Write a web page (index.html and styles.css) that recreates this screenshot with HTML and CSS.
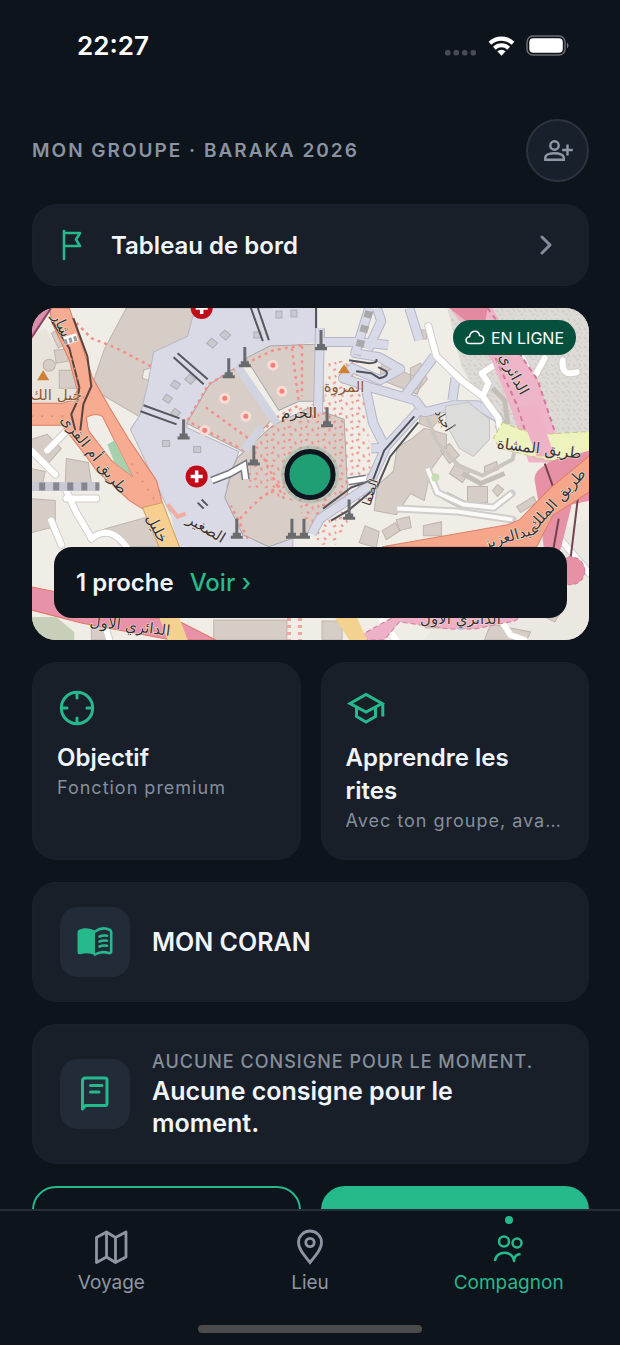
FILE: index.html
```html
<!DOCTYPE html>
<html lang="fr">
<head>
<meta charset="utf-8">
<meta name="viewport" content="width=device-width, initial-scale=1">
<title>Mon groupe</title>
<link rel="stylesheet" href="styles.css">
</head>
<body>
<div class="app">
  <header class="status">
    <time class="clock">22:27</time>
    <div class="status-icons">
      <svg width="32" height="8" viewBox="0 0 32 8" fill="#484b51"><rect x="0" y="1" width="5.500" height="5.500" rx="2"/><rect x="8.500" y="1" width="5.500" height="5.500" rx="2"/><rect x="17" y="1" width="5.500" height="5.500" rx="2"/><rect x="25.500" y="1" width="5.500" height="5.500" rx="2"/></svg>
      <svg width="27" height="20" viewBox="0 0 27 20" fill="#fff"><path d="M.6 5.700a18.500 18.500 0 0 1 25.800 0l-2.700 3.100a14.700 14.700 0 0 0-20.400 0z"/><path d="M5 10.700a12.300 12.300 0 0 1 17 0l-2.700 3a8.300 8.300 0 0 0-11.600 0z"/><path d="M9.300 15.300a6.200 6.200 0 0 1 8.400 0L13.500 19.800z"/></svg>
      <svg width="44" height="22" viewBox="0 0 44 22"><rect x="1" y="1" width="38" height="19" rx="6" fill="none" stroke="#6b6e73" stroke-width="1.500"/><rect x="3.300" y="3.300" width="33.500" height="14.500" rx="4" fill="#fff"/><path d="M41 7.500q3 3 0 6z" fill="#777a7f"/></svg>
    </div>
  </header>

  <main class="content">
    <div class="heading">
      <h1 class="group-name">MON GROUPE · BARAKA 2026</h1>
      <button class="add" aria-label="Ajouter une personne">
        <svg width="32" height="28" viewBox="0 0 32 28" fill="none" stroke="#8e97a4" stroke-width="2.400"><circle cx="12.500" cy="8.500" r="4.200"/><path d="M3.300 22.700v-2c0-6 18.500-6 18.500 0v2zM25.500 7.500v11M20.200 13h10.600"/></svg>
      </button>
    </div>

    <a class="card dashboard" href="#tableau">
      <svg width="28" height="32" viewBox="0 0 28 32" fill="none" stroke="#25b98c" stroke-width="2.600" stroke-linecap="round" stroke-linejoin="round"><path d="M5 30V2M5 4h16l-4 6.500 4 6.500H5"/></svg>
      <span class="title grow">Tableau de bord</span>
      <svg width="14" height="22" viewBox="0 0 14 22" fill="none" stroke="#858e9b" stroke-width="3" stroke-linecap="round" stroke-linejoin="round"><path d="M4 3l8 8-8 8"/></svg>
    </a>

    <section class="map" aria-label="Carte du groupe">
      <svg class="map-art" viewBox="0 0 557 331" preserveAspectRatio="xMidYMid slice">
        <defs>
          <pattern id="rock" width="11" height="9" patternUnits="userSpaceOnUse"><rect width="11" height="9" fill="#dedbd6"/><path d="M1 2l3 2M7 1l2 3M4 7l3-1M9 8l1-1" stroke="#c9c6c2" stroke-width="1"/></pattern>
          <pattern id="steps" width="17" height="13" patternUnits="userSpaceOnUse"><path d="M1 2l3-1M8 3l1 3M3 8l2 2M12 10l3-1M14 2l1 2" stroke="#f78580" stroke-width="1.700"/></pattern>
          <g id="minaret"><path d="M-1.500-10h3v16h-3zM-4 4h8v3h-8zM-6 7H6v3H-6z" fill="#6a6b6e"/></g>
          <g id="clinic"><circle r="11" fill="#c00c18"/><path d="M-6 0H6M0-6V6" stroke="#fff" stroke-width="3.500"/></g>
        </defs>
        <rect width="557" height="331" fill="#f0ede7"/>
        <!-- hillside -->
        <path d="M415 0h142v180l-65-38-35-34-28-50z" fill="url(#rock)"/>
        <path d="M480 240l77-30v121H390z" fill="#ebe8e1"/>
        <!-- grounds and blocks -->
        <path d="M0 28l14-8 25 37 6 27-13 16H0z" fill="#e8e3db"/>
        <g fill="#d6cdc6" stroke="#bfb4ab" stroke-width="1">
          <path d="M95 0h92l-6 11-16 9-4 8-13 6-3 11-12 10-21 7-1 8 8 3-7 30-1 7-46-27-5-4 13-38z"/>
          <path d="M20 25l15-8 6 16-14 7zM28 62h17v18H28zM23 42l12-1 2 12-12 2z"/><circle cx="18" cy="57" r="6"/>
          <path d="M0 131l16-5 14 14-15 17-15-10zM35 150l22 4 3 20-26 1zM0 190l24 2v26l-24 6zM0 160l14 3-3 14H0z"/>
          <path d="M74 220l40-11 20 29H98z"/>
          <path d="M350 54l40 18-5 14-38-15zM385 22h9v9h-9zM378 60l10-5 7 16-8 10-9-4z"/>
          <path d="M380 130l12-10 22 6 0 14-16 22-6 30-14-7-14 21-22-4 3-25 16-14 4-24zM388 106l12-6 9 9-10 11-12-5zM408 142l9-7 10 12-10 8zM424 154l14 8-8 12-13-9zM452 158l12-5 2 8-14 5zM435 178h20v16h-20zM415 184l18 9-4 7-18-9zM391 217l18-4v14h-18zM350 222l13-8 5 8-14 9zM333 217l14 6-3 16-17-5zM364 211l13-3 2 11-12 3zM484 198l17-10 3 6-16 10zM465 176l6 5-6 7-5-6z"/>
          <path d="M60 316h18v15H60zM182 311h73v20h-73zM290 312h20v19h-20zM393 305h18v14h-18zM514 300l13 5-5 8-12-6zM458 315l40 8-4 8h-42z"/>
        </g>
        <!-- plaza -->
        <path d="M185 0h72l10 37-20 2-34 16-37 24-20 36-1 4 52 24-12 35 17 42 17 5 32-5v25h-99l-23-40-17-35-23-49 10-15 7-29 6-33 34-16 5-19 16-9z" fill="#d9dae6" stroke="#b7b8c5"/>
        <path d="M240 0h46v34l-49 6z" fill="#d9dae6"/>
        <path d="M131 167l60-16 5 14-7 35 22 38h-65z" fill="#d9dae6"/>
        <g fill="#d8cec7" stroke="#aaa7aa">
          <path d="M155 115l23-39 28-18 36 51-31 34z"/><path d="M214 50l24-12 51-2 3 57-25 0-20 9z"/>
          <path d="M206 149l35-32 37-18 34 12 4 80-34 31-45 16-26-12-18-37 8-30z"/>
        </g>
        <path d="M295 55l30-5 10 60 7 83-63 5-65-20 12-50 42-30 25-5z" fill="url(#steps)"/>
        <path d="M258 185l28-3 34 30-16 24h-16z" fill="url(#steps)"/>
        <g fill="none" stroke="#f49089" stroke-width="2.500" stroke-dasharray="3 4">
          <path d="M40 10l20 20 25 10 38 20M156 112l21-36 31-18 34-16 28-5M160 115l53 27 30-32 24-13M174 99l48 35M260 40l7 55M270 38v50M208 210l20-20 28-18M216 230l-17-33M232 150l20 40"/>
        </g>
        <g fill="#f47f79" stroke="#f7dcd5" stroke-width="3"><circle cx="193" cy="90" r="4"/><circle cx="214" cy="108" r="4"/><circle cx="241" cy="57" r="4"/><circle cx="250" cy="83" r="4"/><circle cx="173" cy="122" r="4"/></g>
        <path d="M205 57l40 58M212 142l18-23" fill="none" stroke="#d1d4e0" stroke-width="8"/>
        <g fill="none" stroke="#aeb0b9"><path d="M158 66l6 5-5 5-6-5zM143 72l6 4-4 5-6-4zM135 86l6 4-4 5-6-4zM143 100l6 4-4 5-6-4zM131 132h7v6h-7zM162 138h7v6h-7zM180 30l6 5-5 5-6-5zM193 22l6 5-5 5-6-5zM222 24h7v6h-7zM244 3h6v7h-6zM259 2h6v7h-6z" fill="#c9c8cc"/></g>
        <g fill="none" stroke="#55575c" stroke-width="2"><path d="M142 49l30 27M146 45l30 26M109 103l36 13M112 97l36 13M219 0l12 33M226 0l11 32M284 0v25M166 194l6 6M170 191l6 6"/></g>
        <!-- lilac streets -->
        <g fill="none" stroke="#b4b6c8" stroke-width="10" stroke-linejoin="round"><path d="M288 20l-2 84M286 34h40l30 3M337 0l-14 45 24 4 21 12-20 11-28-12-9 10 30 10 42 12 9 12 28-7 25 0 20 12 8 14M370 91l32-43M420 92l3-22M333 77l8 38 12 24-14 1M377 0l10 32M345 1l4 12-13 28M386 103l-32 35-18 40-30 20-18 12-8 15"/></g>
        <g fill="none" stroke="#d9dae8" stroke-width="8" stroke-linejoin="round"><path d="M288 20l-2 84M286 34h40l30 3M337 0l-14 45 24 4 21 12-20 11-28-12-9 10 30 10 42 12 9 12 28-7 25 0 20 12 8 14M370 91l32-43M420 92l3-22M333 77l8 38 12 24-14 1M377 0l10 32M345 1l4 12-13 28M386 103l-32 35-18 40-30 20-18 12-8 15"/></g>
        <path d="M337 3l-12 44" stroke="#aaa9aa" stroke-width="8" stroke-dasharray="7 8"/>
        <path d="M317 52l20 3q9 0 7-4M324 63l15 2 8 5q10-2 7-7l-8-4M382 108l-30 34-11 29-22 8-28 21M386 114l-28 34-13 30-29 24-17 10" fill="none" stroke="#51535b" stroke-width="2"/>
        <path d="M413 98l23-4 21 17v20l-16 17-14-8-13-24z" fill="#dcdddb" stroke="#c4c5c3"/>
        <path d="M395 110l10 24 21 23 24 10 30-16 4-18" fill="none" stroke="#ccc6c0" stroke-width="4"/>
        <path d="M460 80l12 12 3 22-12 6M430 165l18 10 24-10" fill="none" stroke="#c4beb8" stroke-width="5"/>
        <!-- pale local roads -->
        <g fill="none" stroke="#d0cdca" stroke-width="8" stroke-linecap="round" stroke-linejoin="round"><path d="M396 18l8 30 26 25 20 15 16 22 2 15M450 88l6-13-7-10 16-10 9 9 10-9M490 50l10 22 12-22M530 52q-2 17 14 12M395 160l10 24 26 12 30 3 18-14M365 200l60 3 55 8M16 142l22-22M0 142l24 24M35 182l10 22 15 25M35 190h30M20 212l10 24M60 230q18-15 35 8M510 210l47 55M72 310l6 21"/></g>
        <g fill="none" stroke="#fff" stroke-width="6" stroke-linecap="round" stroke-linejoin="round"><path d="M396 18l8 30 26 25 20 15 16 22 2 15M450 88l6-13-7-10 16-10 9 9 10-9M490 50l10 22 12-22M530 52q-2 17 14 12M16 142l22-22M0 142l24 24M35 182l10 22 15 25M35 190h30M20 212l10 24M60 230q18-15 35 8M510 210l47 55M72 310l6 21M350 312l14 19M466 308l12 18 14 5"/></g>
        <g fill="none" stroke="#fbfaf8" stroke-width="4"><path d="M395 160l10 24 26 12 30 3 18-14M365 200l60 3 55 8"/></g>
        <circle cx="403" cy="169" r="4" fill="#c5dcb4"/>
        <path d="M0 178h68" stroke="#c8c9d4" stroke-width="9"/><path d="M8 178h60" stroke="#86878e" stroke-width="8" stroke-dasharray="6 8"/>
        <!-- main orange road -->
        <path d="M18 0h20l10 29 13 40 17 30 20 33 27 40 6 23-20 5-13-8-33-30-7-10-27-35L0 117V95h31l10-3 5-10-8-30-17-37z" fill="#f7ab90" stroke="#dc7d63"/>
        <path d="M55 109q9-5 16-1l12 24 18 36-21-16-23-30z" fill="#f0ede6" stroke="#dc7d63"/>
        <path d="M76 136l7-4 18 36-18-14z" fill="#a7d0ae"/>
        <path d="M20 12l18 28 10 39-2 14-6 13 4 16M42 10l14 38 4 30-8 18-3 26" fill="none" stroke="#594440" stroke-width="2"/>
        <path d="M33 33l13-4" stroke="#fff" stroke-width="8"/><path d="M33 34l13-4" stroke="#999" stroke-width="5" stroke-dasharray="3 2"/>
        <path d="M40 50l14 45M0 108h35M100 155l24 38" fill="none" stroke="#dc8c75" stroke-width="1.500" stroke-dasharray="2 8"/>
        <path d="M111 199l20-5 19 50h-20z" fill="#f8cf91" stroke="#cda05d"/>
        <path d="M136 196l10 12 8-3" fill="none" stroke="#f1ada0" stroke-width="4"/>
        <path d="M180 172l18-7 14-8 2 14M316 173l18-3" fill="none" stroke="#76787f" stroke-width="8"/><path d="M180 172l18-7 14-8 2 14M316 173l18-3" fill="none" stroke="#fff" stroke-width="5"/>
        <!-- ring road -->
        <path d="M0 0h20L0 30z" fill="#dd8cab"/><path d="M20 0L0 30" stroke="#864662" stroke-width="2"/>
        <path d="M417 0h43l11 20 34 52 21 62 3 20h-33l-17-52-20-50z" fill="#eeb4c8"/>
        <path d="M417 0h38l-4 24-10-5z" fill="#e18aa0"/>
        <path d="M455 0l16 22 34 50 20 60M463 50l22 48 16 52" fill="none" stroke="#d2799c" stroke-width="2" stroke-dasharray="5 4"/>
        <path d="M470 114l20 8 20 4 47-3v25l-40 4-50-12-6-11z" fill="#eef2bd" stroke="#c3cb83" stroke-dasharray="5 3"/>
        <path d="M486 100l18-4 18 52h-18z" fill="#eeb1c6"/>
        <path d="M502 172q-2-10 18-20l37-10v50l-18 4-10 40-6 20-12-18-5-43z" fill="#e791a6"/>
        <path d="M512 155l10 28M545 190l-7 58M526 210l-6 34" fill="none" stroke="#72424e" stroke-width="2"/>
        <path d="M350 238l125-22 12-5 31-32 39-32v36l-37 24-16 31z" fill="#f6a78b" stroke="#dc8168"/>
        <circle cx="538" cy="262" r="14" fill="#e791a6" stroke="#d2799c" stroke-dasharray="4 3"/>
        <path d="M0 278l25 5 30 20 90 8 39 20h-44l-90-17-50-13z" fill="#e892aa" stroke="#e17660"/>
        <path d="M0 308h25l18 15v8H0z" fill="#c7cfb8"/>
        <path d="M320 331l36-20 10-5h125l-9 6-40 8h-25l-50-7-15 18z" fill="#edb0c6" stroke="#d2799c" stroke-dasharray="5 3"/>
        <path d="M303 309h22l10 22h-18zM128 309h20l8 22h-20z" fill="#f3d290"/>
        <path d="M257 309v22M268 309v22" stroke="#f5a39b" stroke-width="4" stroke-dasharray="3 4"/>
        <!-- landmarks -->
        <use href="#minaret" x="197" y="60"/><use href="#minaret" x="213" y="49"/><use href="#minaret" x="289" y="32"/><use href="#minaret" x="152" y="121"/><use href="#minaret" x="222" y="147"/><use href="#minaret" x="295" y="109"/><use href="#minaret" x="205" y="220"/><use href="#minaret" x="260" y="220"/><use href="#minaret" x="272" y="220"/><use href="#minaret" x="317" y="201"/>
        <use href="#clinic" x="170" y="0"/><use href="#clinic" x="165" y="168"/>
        <path d="M12 62l6 10H6zM312 56l6 9h-12z" fill="#cf8036"/>
        <g class="map-label">
          <text x="25" y="92" fill="#8b5b3b">جبل الك</text><text x="312" y="84" fill="#8b5b3b">المروة</text>
          <text x="267" y="110">الحرم</text>
          <text transform="translate(26 19) rotate(65)">شار</text>
          <text transform="translate(59 149) rotate(51)">طريق أم القرى</text>
          <text transform="translate(121 222) rotate(63)">خليل</text>
          <text transform="translate(172 224) rotate(31)">الصغير</text>
          <text transform="translate(477 68) rotate(61)">الدائري</text>
          <text transform="translate(506 145) rotate(7)">طريق المشاة</text>
          <text transform="translate(528 194) rotate(-48)">طريق الملك</text>
          <text transform="translate(480 232) rotate(-16)">عبدالعزيز</text>
          <text class="minor" transform="translate(408 114) rotate(60)">أجياد</text>
          <text class="minor" transform="translate(342 185) rotate(-72)">الصفا</text>
          <text transform="translate(98 322) rotate(7)">الدائري الأول</text>
          <text x="428" y="315">الدائري الأول</text>
        </g>
        <circle cx="278" cy="166" r="29" fill="#89b6a1" opacity=".45"/>
        <circle cx="278" cy="166" r="23" fill="#209f75" stroke="#0d151e" stroke-width="5"/>
      </svg>
      <span class="online">
        <svg width="20" height="15" viewBox="0 0 20 15" fill="none" stroke="#fff" stroke-width="1.500"><path d="M5 13.500C-.2 13.500-.3 7 4.500 6.800 5.500-.5 13.500-.5 14.600 5.500 20 5.800 20 13.500 15 13.500z"/></svg>
        EN LIGNE
      </span>
      <div class="nearby"><strong class="nearby-count">1 proche</strong><a class="see" href="#proches">Voir ›</a></div>
    </section>

    <div class="tiles">
      <a class="card tile" href="#objectif">
        <svg class="tile-icon" width="40" height="40" viewBox="0 0 40 40" fill="none" stroke="#25b98c" stroke-width="3" stroke-linecap="round"><circle cx="20" cy="20" r="15.700"/><path d="M20 5v5M20 30v5M5 20h5M30 20h5"/></svg>
        <span class="title">Objectif</span>
        <span class="caption">Fonction premium</span>
      </a>
      <a class="card tile" href="#rites">
        <svg class="tile-icon" width="40" height="40" viewBox="0 0 40 40" fill="none" stroke="#25b98c" stroke-width="3"><path d="M4 15.500L20 6.500l16 9-16 8.500zM10.500 19v9.500L20 34l9.500-5.500V19M36.800 15v13.500"/></svg>
        <span class="title">Apprendre les rites</span>
        <span class="caption">Avec ton groupe, avant le départ</span>
      </a>
    </div>

    <a class="card feature" href="#coran">
      <span class="badge"><svg width="38" height="32" viewBox="0 0 38 32"><path d="M19 4.800C14 1.500 7 1.500 3 3.800Q1.500 4.500 1.500 6.500V26q0 3 3 2.200C9.500 26.500 15 27 19 29.500z" fill="#25b98c"/><path d="M19 5.500C24 2 30 2 34 4q1.200.6 1.200 2.500V25q0 2.500-2.500 2C28 25.500 23 26 19 28.500M23.500 10.500q4-1.500 7.500-.7M23.500 15.500q4-1.500 7.500-.7M23.500 20.500q4-1.500 7.500-.7" fill="none" stroke="#25b98c" stroke-width="2.600" stroke-linecap="round"/></svg></span>
      <span class="title large">MON CORAN</span>
    </a>

    <section class="card feature notice">
      <span class="badge"><svg width="32" height="36" viewBox="0 0 32 36" fill="none" stroke="#25b98c" stroke-width="3" stroke-linecap="round" stroke-linejoin="round"><path d="M3.500 33V5q0-3 3-3H26q2 0 2 2v23.500q0 2-2 2H6.500zM11.500 9.500H23M11.500 16H20"/></svg></span>
      <div class="notice-text">
        <p class="overline">AUCUNE CONSIGNE POUR LE MOMENT.</p>
        <p class="title large">Aucune consigne pour le moment.</p>
      </div>
    </section>

    <div class="actions">
      <button class="action" aria-label="Partager"></button>
      <button class="action primary" aria-label="Inviter"></button>
    </div>
  </main>

  <nav class="tabs">
    <div class="tab-row">
      <a class="tab" href="#voyage"><svg width="36" height="36" viewBox="0 0 36 36" fill="none" stroke="currentColor" stroke-width="2.800" stroke-linejoin="round"><path d="M3.500 8.500L13.500 3 22.500 8.500 33 3v25L22.500 33.500 13.500 28 3.500 33.500zM13.500 3v25M22.500 8.500v25"/></svg>Voyage</a>
      <a class="tab" href="#lieu"><svg width="36" height="36" viewBox="0 0 36 36" fill="none" stroke="currentColor" stroke-width="2.800"><path d="M18 33.500C11 25 6.500 19.500 6.500 13.500a11.500 11.500 0 0 1 23 0C29.500 19.500 25 25 18 33.500z"/><circle cx="18" cy="13.500" r="4.200"/></svg>Lieu</a>
      <a class="tab active" href="#compagnon" aria-current="page"><svg width="36" height="36" viewBox="0 0 36 36" fill="none" stroke="currentColor" stroke-width="2.500"><circle cx="13" cy="12.500" r="5"/><circle cx="26" cy="14" r="4.500"/><path d="M4 32c1-11 18-11 19 0 0-4 2.500-6.500 6.500-7" stroke-linejoin="round"/></svg>Compagnon</a>
    </div>
    <div class="home-bar"></div>
  </nav>
</div>
</body>
</html>
```
FILE: styles.css
```css
* { box-sizing: border-box; }
body { margin: 0; background: #0d141c; color: #f0f4fb; font-family: Inter, "Noto Sans", sans-serif; }
h1, p { margin: 0; }
a { color: inherit; text-decoration: none; }
button { font: inherit; cursor: pointer; }
svg { display: block; flex: none; }

.app { height: 100vh; display: flex; flex-direction: column; }
.status { flex: none; display: flex; justify-content: space-between; align-items: center; padding: 32px 50px 0 77px; }
.clock { font-size: 26px; line-height: 28px; font-weight: 600; color: #fff; }
.status-icons { display: flex; align-items: center; gap: 11px; }
.status-icons svg:first-child { align-self: flex-end; }

.content { flex: 1; min-height: 0; overflow: hidden; display: flex; flex-direction: column; gap: 22px; padding: 59px 31px 0 32px; }
.content > * { flex: none; }
.heading { display: flex; align-items: center; justify-content: space-between; }
.group-name { font-size: 19px; line-height: 24px; font-weight: 600; letter-spacing: 2px; color: #8a93a1; }
.add { width: 63px; height: 63px; padding: 0; display: grid; place-items: center; border: 2px solid #2a333e; border-radius: 50%; background: #18202b; }

.card { background: #181f29; border: 1px solid #1a212b; border-radius: 24px; }
.title { font-size: 24px; line-height: 33px; font-weight: 600; }
.large { font-size: 25px; line-height: 32px; }
.grow { flex: 1; }
.dashboard { display: flex; align-items: center; gap: 24px; min-height: 82px; padding: 0 36px 0 26px; }

.map { position: relative; height: 332px; overflow: hidden; border-radius: 24px; }
.map-art { width: 100%; height: 100%; }
.map-label { font-family: "DejaVu Sans", sans-serif; font-size: 15px; fill: #383332; text-anchor: middle; paint-order: stroke; stroke: #f1e9df; stroke-width: 1px; }
.minor { font-size: 12px; }
.online { position: absolute; top: 12px; right: 13px; display: flex; align-items: center; gap: 6px; height: 35px; padding: 0 12px; border-radius: 18px; background: #06513e; color: #fff; font-size: 16px; }
.nearby { position: absolute; left: 22px; right: 22px; bottom: 22px; display: flex; align-items: center; gap: 16px; height: 71px; padding: 0 22px; border-radius: 18px; background: #0d141c; font-size: 24px; }
.nearby-count { font-weight: 600; }
.see { color: #25b98c; font-size: 24px; font-weight: 500; }

.tiles, .actions { display: grid; grid-template-columns: 1fr 1fr; gap: 20px; }
.tile { display: flex; flex-direction: column; min-width: 0; min-height: 197px; padding: 25px 24px; }
.tile-icon { margin-bottom: 13px; }
.caption { font-size: 18px; line-height: 27px; letter-spacing: 1px; color: #858e9a; overflow: hidden; white-space: nowrap; text-overflow: ellipsis; }

.feature { display: flex; align-items: center; gap: 22px; min-height: 120px; padding: 20px 27px; }
.notice { min-height: 140px; }
.badge { flex: none; width: 70px; height: 70px; display: grid; place-items: center; border-radius: 18px; background: #212c38; }
.overline { font-size: 18px; line-height: 26px; font-weight: 500; letter-spacing: 1px; color: #858e9a; }
.action { height: 82px; border: 2px solid #25b98c; border-radius: 24px; background: transparent; }
.primary { background: #25b98c; }

.tabs { flex: none; display: flex; flex-direction: column; align-items: center; gap: 29px; padding-bottom: 12px; border-top: 2px solid #252d36; }
.tab-row { width: 100%; display: grid; grid-template-columns: repeat(3, 1fr); padding: 18px 12px 0; }
.tab { position: relative; display: flex; flex-direction: column; align-items: center; gap: 4px; font-size: 19px; line-height: 27px; color: #8e96a3; }
.active { color: #25b98c; }
.active::before { content: ""; position: absolute; top: -13px; width: 8px; height: 8px; border-radius: 50%; background: #25b98c; }
.home-bar { width: 36%; height: 8px; border-radius: 4px; background: #4b4b4b; }
```
